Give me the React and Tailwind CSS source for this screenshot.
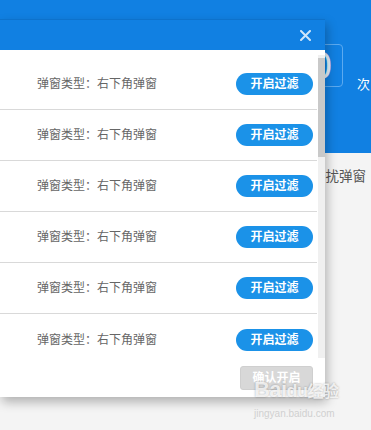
import React from "react";

const rows = [1, 2, 3, 4, 5, 6];

export default function App() {
  return (
    <div
      className="relative h-[430px] w-[371px] overflow-hidden bg-[#f4f4f4]"
      style={{ fontFamily: '"Liberation Sans", "Noto Sans CJK SC", sans-serif' }}
    >
      {/* page behind the dialog */}
      <div className="relative h-[153px] bg-[#1180e2]">
        <div className="absolute left-[290px] top-[44px] flex h-[43px] w-[53px] items-center justify-end rounded-[4px] border border-[#5caaf0] pr-[10px] text-[38px] font-light leading-none text-[#e6f2fc]">
          0
        </div>
        <div className="absolute left-[357px] top-[75px] text-[13px] text-white">次</div>
      </div>
      <div className="flex justify-end pr-[5px] pt-[14px] text-[13.5px] text-[#555]">干扰弹窗</div>

      {/* dialog */}
      <div className="absolute left-0 top-[19px] flex w-[325px] flex-col shadow-[2px_5px_10px_rgba(0,0,0,0.28)]">
        <div className="flex h-[31px] items-center justify-end border-t border-[#0d72cc] bg-[#1180e2] pr-[14px]">
          <svg width="11" height="11" viewBox="0 0 11 11" className="text-[#cfe5fa]">
            <path d="M1 1L10 10M10 1L1 10" stroke="currentColor" strokeWidth="2" strokeLinecap="round" />
          </svg>
        </div>
        <div className="flex h-[347px] flex-col bg-white">
          <div className="flex h-[310px] overflow-hidden">
            <div className="flex flex-1 flex-col divide-y divide-[#d9d9d9] pt-[9px]">
              {rows.map((r) => (
                <div key={r} className="flex h-[51px] shrink-0 items-center justify-between pl-[37px] pr-[4px]">
                  <span className="text-[12px] text-[#666]">弹窗类型：右下角弹窗</span>
                  <button className="flex h-[22px] w-[77px] items-center justify-center rounded-full bg-[#1b92e8] text-[12px] font-bold text-white">
                    开启过滤
                  </button>
                </div>
              ))}
            </div>
            <div className="mb-[2px] ml-[1px] mt-[5px] flex w-[7px] flex-col bg-[#f0f0f0]">
              <div className="mt-[3px] h-[99px] bg-[#c9c9c9]" />
            </div>
          </div>
          <div className="flex justify-end pr-[12px] pt-[6px]">
            <button className="flex h-[24px] w-[73px] items-center justify-center rounded-[3px] border border-[#cfcfcf] bg-[#d8d8d8] text-[12px] font-bold text-white">
              确认开启
            </button>
          </div>
        </div>
      </div>

      {/* watermark */}
      <div className="pointer-events-none absolute left-[254px] top-[379px] flex flex-col items-start text-white/80">
        <span className="text-[22px] font-bold leading-none tracking-tight [text-shadow:0_0_2px_rgba(0,0,0,0.35)]">
          Bai<span className="text-[18px]">du</span>
          <span className="text-[16px]">经验</span>
        </span>
        <span className="mt-[8px] text-[10px] leading-none text-[#d0d0d0]">jingyan.baidu.com</span>
      </div>
    </div>
  );
}
